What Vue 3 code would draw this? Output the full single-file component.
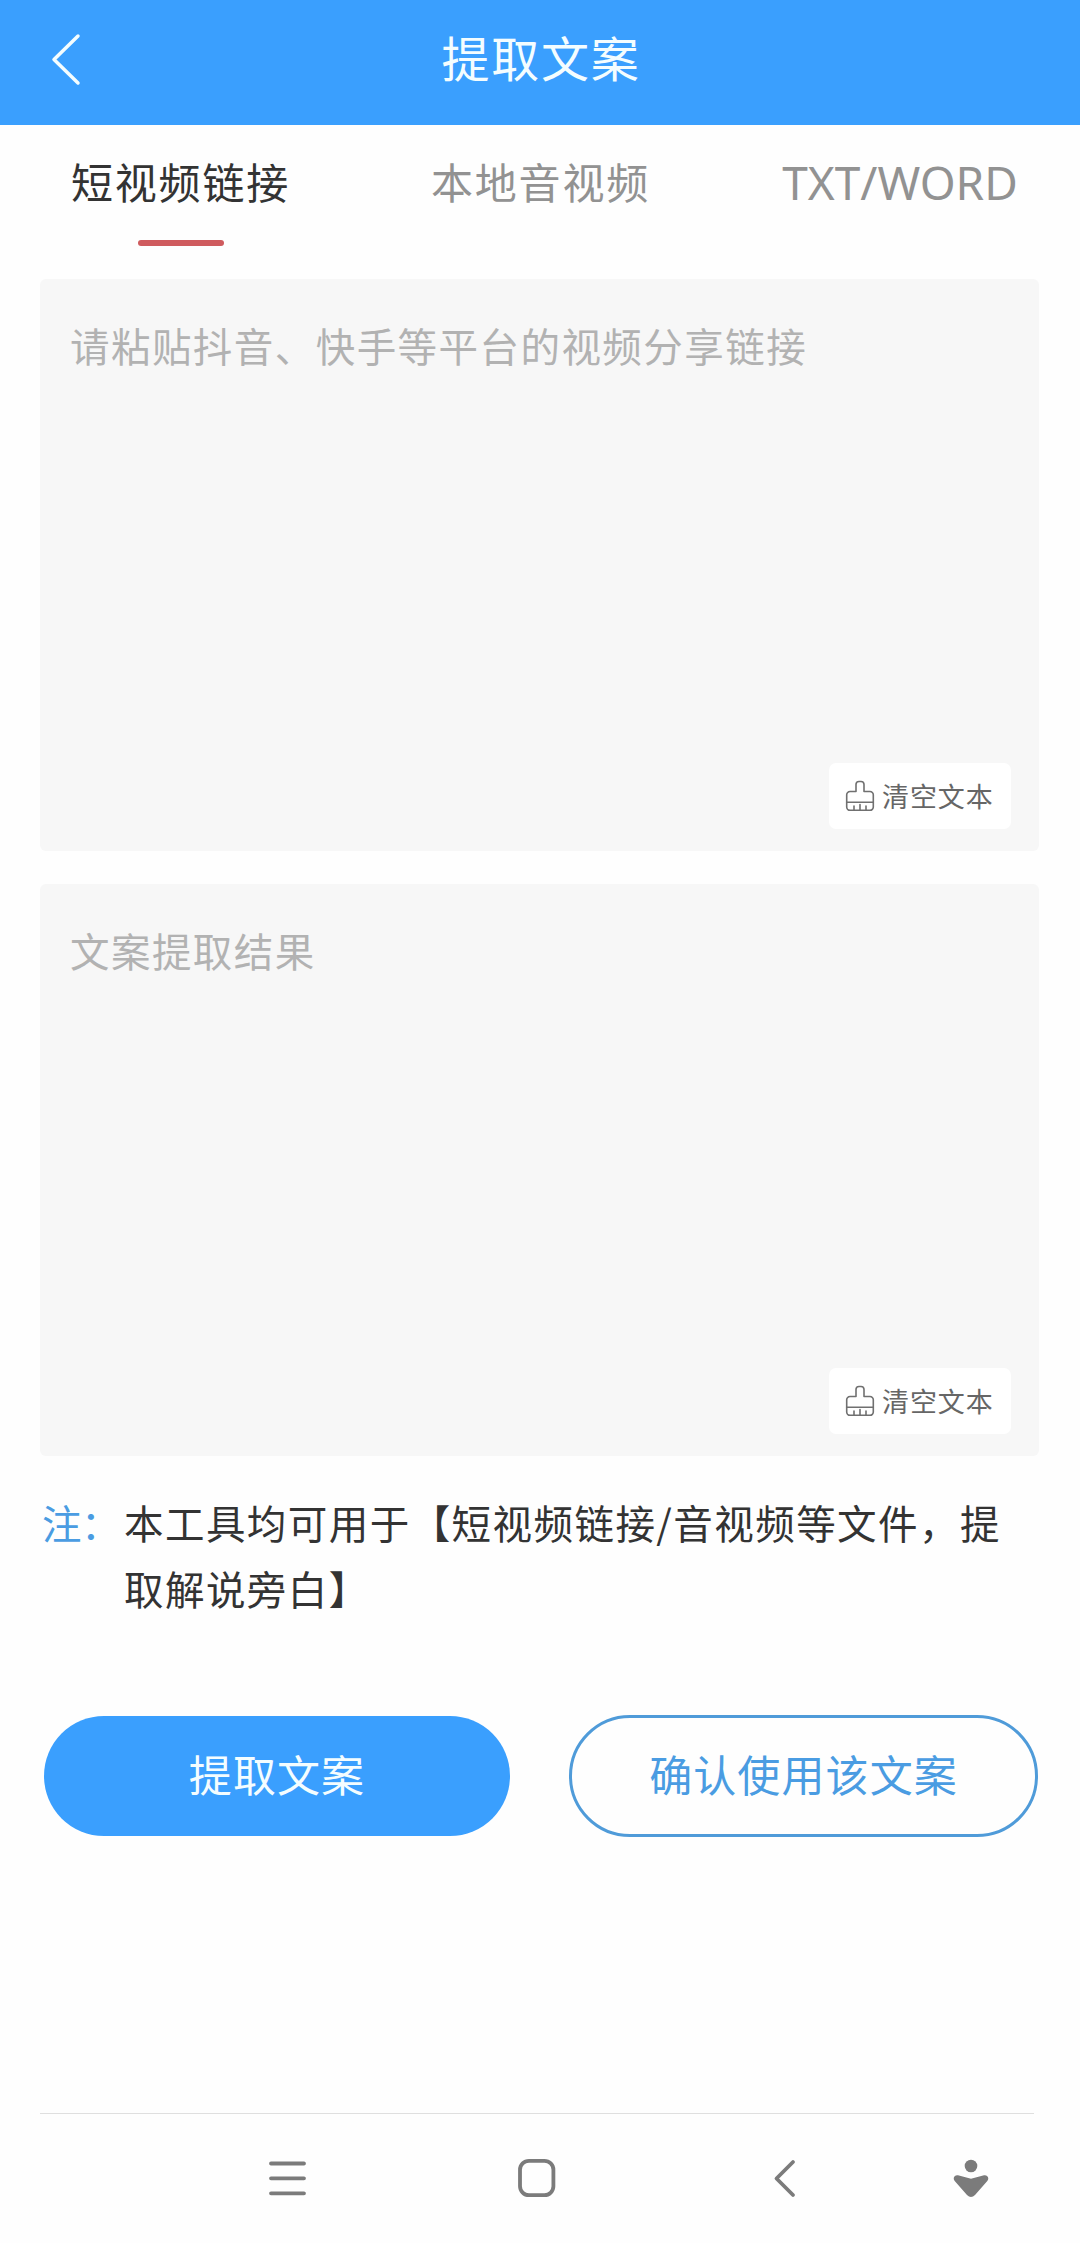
<template>
  <div class="page">
    <header class="header">
      <button type="button" class="header-back" aria-label="返回">
        <svg width="32" height="54" viewBox="0 0 32 54">
          <path d="M28 4 L4 27.500 L28 51" />
        </svg>
      </button>
      <h1 class="header-title">提取文案</h1>
    </header>

    <nav class="tabs">
      <button
        v-for="(tab, index) in tabs"
        :key="tab"
        type="button"
        class="tab"
        :class="{ active: activeTab === index, latin: index === 2 }"
        @click="activeTab = index"
      >
        <span>{{ tab }}</span>
      </button>
    </nav>

    <main class="content">
      <section v-for="box in boxes" :key="box.id" class="box">
        <textarea
          v-model="box.text"
          class="box-input"
          :placeholder="box.placeholder"
        ></textarea>
        <button type="button" class="box-clear" @click="box.text = ''">
          <svg width="30" height="32" viewBox="0 0 30 32">
            <path
              d="M11 11.500V4.500a3 3 0 0 1 3-3h2a3 3 0 0 1 3 3v7h6a3.300 3.300 0 0 1 3.300 3.300V27a3.300 3.300 0 0 1-3.300 3.300H5A3.300 3.300 0 0 1 1.700 27V14.800A3.300 3.300 0 0 1 5 11.500z"
            />
            <path d="M1.700 22.300h26.600M9 30v-4M15 30v-5.500M21 30v-4" />
          </svg>
          <span>清空文本</span>
        </button>
      </section>

      <div class="note">
        <span class="note-label">注：</span>
        <p class="note-text">
          本工具均可用于【短视频链接/音视频等文件，提取解说旁白】
        </p>
      </div>

      <div class="actions">
        <button type="button" class="action primary">提取文案</button>
        <button type="button" class="action outline">确认使用该文案</button>
      </div>
    </main>

    <footer class="system-bar">
      <svg class="system-menu" width="40" height="40" viewBox="0 0 40 40">
        <path d="M4 5.500h33M4 20.300h33M4 35.300h33" />
      </svg>
      <svg class="system-home" width="40" height="40" viewBox="0 0 40 40">
        <rect x="4" y="2.800" width="33.400" height="34.400" rx="9" />
      </svg>
      <svg class="system-back" width="40" height="40" viewBox="0 0 40 40">
        <path d="M29 4 L12.500 20.500 L29 37" />
      </svg>
      <svg class="system-user" width="40" height="40" viewBox="0 0 40 40">
        <circle cx="20" cy="8" r="6.300" />
        <path
          d="M7 17.300 L20 20.800 L33 17.300 C36.800 16.800 38.500 20.300 36.300 23 L24 37 Q20 41 16 37 L3.700 23 C1.500 20.300 3.200 16.800 7 17.300z"
        />
      </svg>
    </footer>
  </div>
</template>

<script setup>
import { ref } from 'vue';

const tabs = ['短视频链接', '本地音视频', 'TXT/WORD'];
const activeTab = ref(0);

const boxes = ref([
  {
    id: 'source',
    text: '',
    placeholder: '请粘贴抖音、快手等平台的视频分享链接',
  },
  {
    id: 'result',
    text: '',
    placeholder: '文案提取结果',
  },
]);
</script>

<style>
body {
  background-color: #fefefe;
}
</style>

<style scoped>
.page {
  display: flex;
  flex-direction: column;
  width: 1080px;
  height: 2243px;
  overflow: hidden;
  background-color: #fefefe;
  color: #333;
  font-family: 'Noto Sans CJK SC', sans-serif;
}

button {
  padding: 0;
  border: none;
  background: none;
  font-family: inherit;
  cursor: pointer;
}

svg {
  display: block;
  fill: none;
  stroke-linecap: round;
  stroke-linejoin: round;
}

.header {
  display: grid;
  grid-template-columns: 130px 1fr 130px;
  align-items: center;
  height: 125px;
  padding-bottom: 7px;
  box-sizing: border-box;
  background-color: #3a9ffe;
}

.header-back {
  justify-self: start;
  margin-left: 50px;
}

.header-back svg {
  stroke: #f4fdff;
  stroke-width: 3.5;
}

.header-title {
  margin: 0;
  padding: 0 0 6px 2px;
  color: #f4fdff;
  font-size: 48px;
  font-weight: 400;
  line-height: 70px;
  letter-spacing: 1.8px;
  text-align: center;
}

.tabs {
  display: grid;
  grid-template-columns: repeat(3, 1fr);
  height: 154px;
}

.tab {
  display: flex;
  flex-direction: column;
  align-items: center;
  padding: 26px 0 0 1px;
  color: #929292;
  font-size: 42px;
  line-height: 60px;
  letter-spacing: 1.8px;
}

.tab.latin {
  padding: 27px 0 0;
  font-family: 'Noto Sans', sans-serif;
  font-size: 46px;
  letter-spacing: 0;
}

.tab.active {
  color: #333;
}

.tab.active::after {
  content: '';
  width: 86px;
  height: 6px;
  margin-top: 29px;
  border-radius: 3px;
  background-color: #cf5b5e;
}

.content {
  display: flex;
  flex-direction: column;
  padding: 0 41px 0 40px;
}

.box {
  display: flex;
  flex-direction: column;
  height: 572px;
  margin-bottom: 33px;
  padding: 36px 28px 22px 30px;
  box-sizing: border-box;
  border-radius: 6px;
  background-color: #f7f7f7;
}

.box-input {
  flex: 1;
  padding: 0;
  border: none;
  outline: none;
  resize: none;
  background: transparent;
  color: #333;
  font-family: inherit;
  font-size: 39.5px;
  line-height: 60px;
  letter-spacing: 1.45px;
}

.box-input::placeholder {
  color: #b2b2b2;
}

.box-clear {
  display: flex;
  align-items: center;
  align-self: flex-end;
  gap: 7px;
  width: 182px;
  height: 66px;
  padding-left: 16px;
  border-radius: 7px;
  background-color: #fff;
  color: #666;
  font-size: 27px;
  line-height: 40px;
  letter-spacing: 0.9px;
  white-space: nowrap;
}

.box-clear svg {
  stroke: #707070;
  stroke-width: 1.6;
}

.note {
  display: flex;
  padding-left: 2px;
  font-size: 39.5px;
  line-height: 66px;
  letter-spacing: 1.45px;
}

.note-label {
  width: 82px;
  color: #4a9ce2;
  letter-spacing: -0.5px;
}

.note-text {
  flex: 1;
  margin: 0;
}

.actions {
  display: flex;
  align-items: center;
  justify-content: space-between;
  margin-top: 94px;
  padding: 0 1px 0 4px;
}

.action {
  height: 120px;
  padding-bottom: 6px;
  border-radius: 61px;
  font-size: 43px;
  letter-spacing: 1.1px;
}

.action.primary {
  width: 466px;
  background-color: #3a9ffe;
  color: #f4fdff;
}

.action.outline {
  width: 469px;
  height: 122px;
  border: 3px solid #4f9bd9;
  color: #4a9ce2;
}

.system-bar {
  display: flex;
  align-items: flex-start;
  height: 130px;
  margin: auto 46px 0 40px;
  padding-top: 44px;
  box-sizing: border-box;
  border-top: 1px solid #dfdfdf;
}

.system-bar svg {
  flex: none;
  stroke: #7b7b7b;
  stroke-width: 3.8;
}

.system-menu {
  margin-left: 227px;
}

.system-home {
  margin-left: 209px;
}

.system-back {
  margin-left: 208px;
}

.system-bar .system-user {
  margin-left: 147px;
  fill: #7b7b7b;
  stroke: none;
}
</style>
